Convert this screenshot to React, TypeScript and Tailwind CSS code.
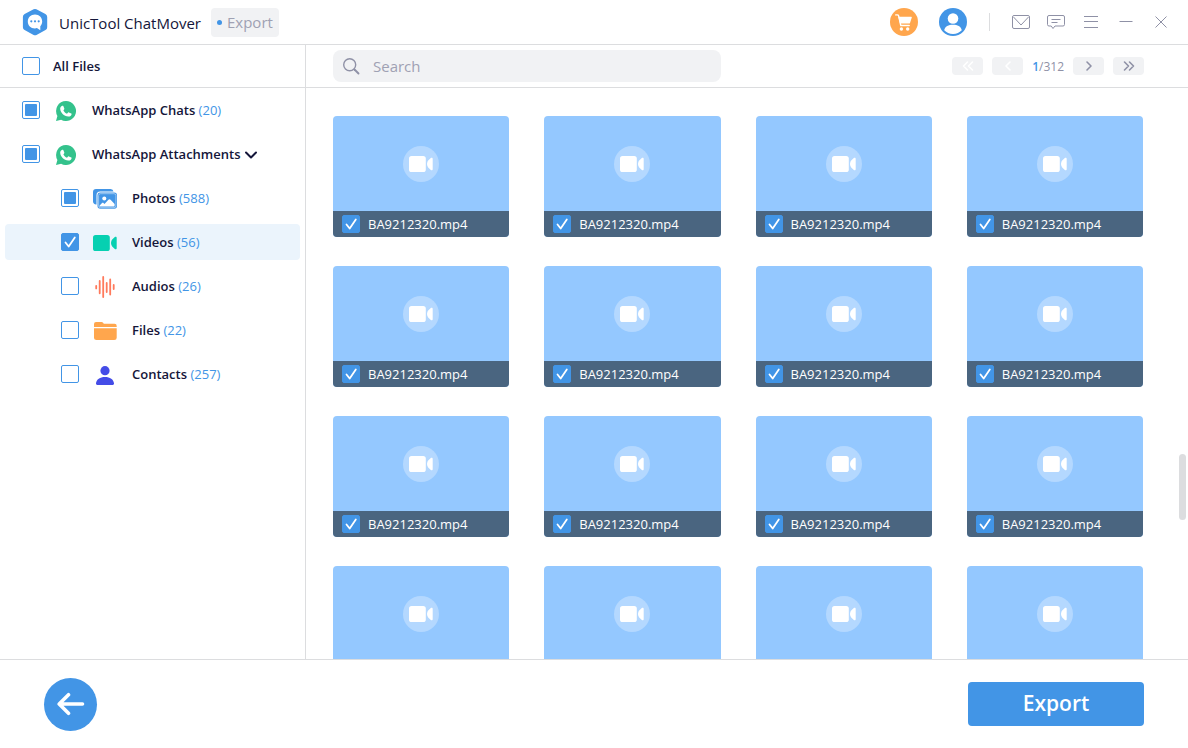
import { useEffect, useRef, useState, type ReactNode } from 'react'

type CheckState = 'on' | 'off' | 'partial'

interface CheckboxProps {
  id: string
  state: CheckState
  onToggle: () => void
}

function Checkbox({ id, state, onToggle }: CheckboxProps) {
  const ref = useRef<HTMLInputElement>(null)

  useEffect(() => {
    if (ref.current) ref.current.indeterminate = state === 'partial'
  }, [state])

  return (
    <span className="grid h-[18px] w-[18px] shrink-0 place-items-center">
      <input
        ref={ref}
        id={id}
        type="checkbox"
        checked={state === 'on'}
        onChange={onToggle}
        className={`col-start-1 row-start-1 h-[18px] w-[18px] appearance-none rounded-[2px] border border-[#4295e6] ${
          state === 'on' ? 'bg-[#4295e6]' : 'bg-white'
        }`}
      />
      {state === 'partial' && (
        <span className="pointer-events-none z-10 col-start-1 row-start-1 h-3 w-3 rounded-[1px] bg-[#4295e6]" />
      )}
      {state === 'on' && (
        <svg className="pointer-events-none z-10 col-start-1 row-start-1 h-[18px] w-[18px]" viewBox="0 0 18 18" fill="none">
          <path d="M4.5 9.500 7.700 13.500 13.800 4.500" stroke="white" strokeWidth="1.800" strokeLinecap="round" strokeLinejoin="round" />
        </svg>
      )}
    </span>
  )
}

function LogoIcon() {
  return (
    <svg className="h-7 w-7" viewBox="0 0 28 28" fill="none">
      <path
        d="M12.600 1.300a3 3 0 0 1 2.800 0l9 4.800A3.200 3.200 0 0 1 26.200 9v10.200a3.200 3.200 0 0 1-1.700 2.800l-9 4.900a3 3 0 0 1-2.900 0l-9-4.900a3.200 3.200 0 0 1-1.700-2.800V9a3.200 3.200 0 0 1 1.700-2.900z"
        fill="#4295e6"
      />
      <path
        d="M14 6.600c4.300 0 7.200 2.900 7.200 6.900 0 1.900-.7 3.500-1.900 4.700v4l-3.400-2.100c-.6.200-1.300.3-1.900.3-4.300 0-7.200-2.900-7.200-6.900S9.700 6.600 14 6.600Z"
        fill="white"
      />
      <g fill="#4295e6">
        <circle cx="10.300" cy="13.300" r="1.100" />
        <circle cx="14" cy="13.300" r="1.100" />
        <circle cx="17.700" cy="13.300" r="1.100" />
      </g>
    </svg>
  )
}

function CartIcon() {
  return (
    <svg className="h-7 w-7" viewBox="0 0 28 28" fill="none">
      <circle cx="14" cy="14" r="14" fill="#ffa64d" />
      <path d="M5.700 6.900h1.700c.6 0 1 .3 1.200.9l2.200 9.700h8.400" stroke="white" strokeWidth="1.400" strokeLinecap="round" strokeLinejoin="round" />
      <path d="M8.300 8.700h12.900c.5 0 .7.3.6.8l-1.800 5.500c-.1.400-.4.6-.8.6h-9.200z" fill="white" />
      <circle cx="11.400" cy="21" r="1.700" fill="white" />
      <circle cx="17.700" cy="21" r="1.700" fill="white" />
    </svg>
  )
}

function UserIcon() {
  return (
    <svg className="h-7 w-7" viewBox="0 0 28 28">
      <circle cx="14" cy="14" r="14" fill="#4295e6" />
      <circle cx="14" cy="10.500" r="5.300" fill="white" />
      <path d="M5.200 22.300c.7-3.900 4.400-5.600 8.800-5.600s8.100 1.700 8.800 5.600A12.200 12.200 0 0 1 14 25.900a12.200 12.200 0 0 1-8.800-3.600Z" fill="white" />
    </svg>
  )
}

function WhatsAppIcon() {
  return (
    <svg className="h-5 w-5" viewBox="0 0 20 20">
      <path d="M10 0a10 10 0 1 1-4.900 18.700L0 20l1.400-5A10 10 0 0 1 10 0Z" fill="#34c28c" />
      <path
        d="M6.300 4.700c.4-.1.800 0 1 .4l1 2.400c.1.300.1.500-.1.800l-.8 1.100c.9 1.600 2 2.700 3.600 3.400l1.100-1.200c.2-.3.500-.3.800-.2l2.400 1.200c.3.200.4.400.3.700-.3 1.600-1.700 2.400-3.200 2.300-4.600-.4-8-3.900-8.200-7.800 0-1.400.7-2.800 2.100-3.100Z"
        fill="white"
      />
    </svg>
  )
}

function PhotosIcon() {
  return (
    <svg className="h-5 w-6" viewBox="0 0 24 20" fill="none">
      <path d="M3 0h14.500a3 3 0 0 1 3 2.600H7.200A3.700 3.700 0 0 0 3.500 6.300v9.200A3 3 0 0 1 0 12.500V3a3 3 0 0 1 3-3Z" fill="#4295e6" />
      <rect x="4.500" y="3.600" width="19.500" height="16.200" rx="2.800" fill="#4295e6" />
      <rect x="5.600" y="4.700" width="17.300" height="14" rx="1.900" stroke="#cfe4f9" strokeWidth=".6" />
      <circle cx="11.300" cy="9.500" r="2" fill="white" />
      <path d="M7.200 17.600c-.8 0-1-.6-.5-1.200l2.100-2.100c.6-.6 1.300-.6 1.900 0l.8.7 3.900-4.200c.7-.7 1.500-.7 2.200 0l4 4.200v1.400c0 .8-.5 1.200-1.200 1.200z" fill="white" />
    </svg>
  )
}

function CameraIcon({ className }: { className: string }) {
  return (
    <svg className={className} viewBox="0 0 24 16" fill="currentColor">
      <rect width="16.800" height="16" rx="2.600" />
      <path d="M18.300 6.200c.2-.6.500-1.100.9-1.600l2.600-2.500c.8-.8 1.900-.4 1.900.7v10.400c0 1.100-1.100 1.500-1.900.7l-2.600-2.500c-.4-.5-.7-1-.9-1.600a6 6 0 0 1 0-3.600Z" />
    </svg>
  )
}

function AudioIcon() {
  return (
    <svg className="h-[22px] w-5" viewBox="0 0 20 22" fill="none" stroke="#ff7a5c" strokeWidth="1.800" strokeLinecap="round">
      <path d="M1.200 9.800v2.600M4.700 5v12.300M8.200 1v20M11.700 7v9M15.200 3.400v15.200M18.700 9v4" />
    </svg>
  )
}

function FolderIcon() {
  return (
    <svg className="h-[18px] w-[23px]" viewBox="0 0 23 18" fill="#ffa64d">
      <path d="M0 5V2a2 2 0 0 1 2-2h5.500c.7 0 1.200.3 1.600.8l.7.9H20.500A2.200 2.200 0 0 1 22.700 4v1z" />
      <path d="M0 6.200h22.700v9.300A2.400 2.400 0 0 1 20.300 18H2.400A2.400 2.400 0 0 1 0 15.500z" />
    </svg>
  )
}

function ContactIcon() {
  return (
    <svg className="h-[19px] w-[18px]" viewBox="0 0 18 19" fill="#444ce7">
      <circle cx="9" cy="4.700" r="4.600" />
      <path d="M9 11c5 0 8.600 2.300 9 6.300.1.900-.4 1.600-1.200 1.600H1.200c-.8 0-1.300-.7-1.200-1.600.4-4 4-6.300 9-6.300Z" />
    </svg>
  )
}

interface FileGroup {
  id: string
  name: string
  count?: number
  icon: ReactNode
  child?: boolean
}

const groups: FileGroup[] = [
  { id: 'chats', name: 'WhatsApp Chats', count: 20, icon: <WhatsAppIcon /> },
  { id: 'attachments', name: 'WhatsApp Attachments', icon: <WhatsAppIcon /> },
  { id: 'photos', name: 'Photos', count: 588, icon: <PhotosIcon />, child: true },
  { id: 'videos', name: 'Videos', count: 56, icon: <CameraIcon className="h-4 w-6 text-[#06d0b1]" />, child: true },
  { id: 'audios', name: 'Audios', count: 26, icon: <AudioIcon />, child: true },
  { id: 'files', name: 'Files', count: 22, icon: <FolderIcon />, child: true },
  { id: 'contacts', name: 'Contacts', count: 257, icon: <ContactIcon />, child: true },
]

const initialChecks: Record<string, CheckState> = {
  all: 'off',
  chats: 'partial',
  attachments: 'partial',
  photos: 'partial',
  videos: 'on',
  audios: 'off',
  files: 'off',
  contacts: 'off',
}

const videos = Array.from({ length: 16 }, (_, i) => ({ id: `video-${i}`, name: 'BA9212320.mp4' }))

function TitleBar() {
  return (
    <header className="flex h-[45px] shrink-0 items-center border-b border-[#dcdddf] pr-[18px] pl-[21px]">
      <LogoIcon />
      <h1 className="ml-[10px] pt-0.5 text-[15px]">UnicTool ChatMover</h1>
      <nav className="ml-[10px] flex h-[29px] items-center gap-[5px] rounded-[4px] bg-[#f1f2f4] px-[6px] text-[15px] text-[#9fa1b3]">
        <span className="h-[5px] w-[5px] rounded-full bg-[#4295e6]" />
        Export
      </nav>
      <div className="ml-auto flex items-center">
        <button aria-label="Store">
          <CartIcon />
        </button>
        <button aria-label="Account" className="ml-[21px]">
          <UserIcon />
        </button>
        <span className="ml-[22px] h-[18px] w-px bg-[#dcdddf]" />
        <div className="ml-[22px] flex items-center gap-[17px] text-[#8f91a6]">
          <button aria-label="Mail">
            <svg className="h-[18px] w-[18px]" viewBox="0 0 18 18" fill="none" stroke="currentColor">
              <rect x=".5" y="2.500" width="17" height="13" rx="1.500" />
              <path d="m1.500 4 7.500 8 7.500-8" />
            </svg>
          </button>
          <button aria-label="Feedback">
            <svg className="h-[18px] w-[18px]" viewBox="0 0 18 18" fill="none" stroke="currentColor">
              <path d="M2 2.500h14a1.500 1.500 0 0 1 1.500 1.500v7.500A1.500 1.500 0 0 1 16 13H8l-2 2.500L4.200 13H2A1.500 1.500 0 0 1 .5 11.500V4A1.500 1.500 0 0 1 2 2.500ZM4.500 6.500h9M4.500 9.500h6" />
            </svg>
          </button>
          <button aria-label="Menu">
            <svg className="h-[18px] w-[18px]" viewBox="0 0 18 18" fill="none" stroke="currentColor">
              <path d="M2 3.500h14M2 8.500h14M2 14.500h14" />
            </svg>
          </button>
          <button aria-label="Minimize">
            <svg className="h-[18px] w-[18px]" viewBox="0 0 18 18" fill="none" stroke="currentColor">
              <path d="M2.500 8.500h13" />
            </svg>
          </button>
          <button aria-label="Close">
            <svg className="h-[18px] w-[18px]" viewBox="0 0 18 18" fill="none" stroke="currentColor">
              <path d="m3.500 3.500 11 11M14.500 3.500l-11 11" />
            </svg>
          </button>
        </div>
      </div>
    </header>
  )
}

interface SidebarProps {
  checks: Record<string, CheckState>
  onToggle: (id: string) => void
}

function Sidebar({ checks, onToggle }: SidebarProps) {
  return (
    <aside className="w-[306px] shrink-0 border-r border-[#dcdddf] text-[13px] font-semibold">
      <div className="flex h-[43px] items-center gap-[13px] border-b border-[#dcdddf] pl-[22px]">
        <Checkbox id="all" state={checks.all} onToggle={() => onToggle('all')} />
        <label htmlFor="all" className="pt-0.5">
          All Files
        </label>
      </div>
      <ul className="flex flex-col gap-2 px-[5px] py-1">
        {groups.map((group) => (
          <li
            key={group.id}
            className={`flex h-9 items-center rounded-[4px] ${group.child ? 'pl-14' : 'pl-[17px]'} ${
              group.id === 'videos' ? 'bg-[#ebf4fc]' : ''
            }`}
          >
            <Checkbox id={group.id} state={checks[group.id]} onToggle={() => onToggle(group.id)} />
            <span className={`flex shrink-0 justify-center pt-0.5 ${group.child ? 'mr-[13px] ml-3 w-7' : 'mx-4 w-5'}`}>
              {group.icon}
            </span>
            <label htmlFor={group.id} className="pt-0.5">
              {group.name}
              {group.count !== undefined && <span className="font-medium text-[#4295e6]"> ({group.count})</span>}
            </label>
            {group.id === 'attachments' && (
              <button aria-label="Collapse attachments" className="ml-[5px] pt-0.5">
                <svg className="h-3 w-3" viewBox="0 0 12 12" fill="none" stroke="currentColor" strokeWidth="2">
                  <path d="m1 3.500 5 5 5-5" strokeLinecap="round" strokeLinejoin="round" />
                </svg>
              </button>
            )}
          </li>
        ))}
      </ul>
    </aside>
  )
}

interface PageButtonProps {
  label: string
  path: string
  disabled?: boolean
}

function PageButton({ label, path, disabled }: PageButtonProps) {
  return (
    <button
      aria-label={label}
      disabled={disabled}
      className={`flex h-[18px] w-[31px] items-center justify-center rounded-[4px] bg-[#f1f2f4] ${
        disabled ? 'text-white' : 'text-[#8f91a6]'
      }`}
    >
      <svg className="h-3 w-3" viewBox="0 0 12 12" fill="none" stroke="currentColor" strokeWidth="1.600">
        <path d={path} strokeLinecap="round" strokeLinejoin="round" />
      </svg>
    </button>
  )
}

function Toolbar() {
  return (
    <div className="flex h-[43px] shrink-0 items-center justify-between gap-6 border-b border-[#dcdddf] pr-11 pl-[27px]">
      <div className="flex h-8 w-full max-w-[388px] items-center gap-3 rounded-lg bg-[#f1f2f4] px-[10px]">
        <svg className="h-[18px] w-[18px] shrink-0" viewBox="0 0 18 18" fill="none" stroke="#8f91a6" strokeWidth="1.400">
          <circle cx="6.700" cy="7.700" r="6" />
          <path d="m11.500 12.500 4 4" strokeWidth="1.900" strokeLinecap="round" />
        </svg>
        <input
          type="search"
          aria-label="Search"
          placeholder="Search"
          className="w-full bg-transparent text-[15px] outline-none placeholder:text-[#9fa1b3]"
        />
      </div>
      <div className="flex shrink-0 items-center gap-[9px]">
        <PageButton label="First page" path="M5.500 2 1.500 6l4 4M10.500 2l-4 4 4 4" disabled />
        <PageButton label="Previous page" path="M8 2 4 6l4 4" disabled />
        <span className="pt-0.5 text-[12px] text-[#8f91a6]">
          <span className="font-semibold text-[#4295e6]">1</span>/312
        </span>
        <PageButton label="Next page" path="m4 2 4 4-4 4" />
        <PageButton label="Last page" path="m1.500 2 4 4-4 4M6.500 2l4 4-4 4" />
      </div>
    </div>
  )
}

interface VideoCardProps {
  id: string
  name: string
}

function VideoCard({ id, name }: VideoCardProps) {
  const [checked, setChecked] = useState(true)

  return (
    <li className="flex flex-col overflow-hidden rounded-[4px] bg-[#94c8ff]">
      <div className="flex h-[95px] items-center justify-center">
        <span className="flex h-9 w-9 items-center justify-center rounded-full bg-[#b4d8ff]">
          <CameraIcon className="h-4 w-6 text-white" />
        </span>
      </div>
      <div className="flex h-[26px] items-center gap-2 bg-[#4a6580] px-[9px] text-[13px] font-medium text-white">
        <Checkbox id={id} state={checked ? 'on' : 'off'} onToggle={() => setChecked(!checked)} />
        <label htmlFor={id} className="pt-0.5">
          {name}
        </label>
      </div>
    </li>
  )
}

export default function App() {
  const [checks, setChecks] = useState(initialChecks)

  const handleToggle = (id: string) => {
    setChecks((prev) => ({ ...prev, [id]: prev[id] === 'on' ? 'off' : 'on' }))
  }

  return (
    <div className="flex h-screen flex-col bg-white font-['Open_Sans','Noto_Sans',sans-serif] text-[#14163a]">
      <TitleBar />
      <div className="flex min-h-0 flex-1">
        <Sidebar checks={checks} onToggle={handleToggle} />
        <main className="relative flex min-w-0 flex-1 flex-col">
          <Toolbar />
          <div className="min-h-0 flex-1 overflow-y-auto pt-7 pr-[45px] pl-[27px] [scrollbar-width:none]">
            <ul className="grid grid-cols-4 gap-x-[35px] gap-y-[29px]">
              {videos.map((video) => (
                <VideoCard key={video.id} id={video.id} name={video.name} />
              ))}
            </ul>
          </div>
          {/* scroll thumb */}
          <span className="absolute right-[2px] bottom-[139px] h-[66px] w-[7px] rounded-full bg-[#dcdddf]" />
        </main>
      </div>
      <footer className="flex h-[89px] shrink-0 items-center justify-between border-t border-[#dcdddf] px-11">
        <button
          aria-label="Back"
          className="flex h-[53px] w-[53px] items-center justify-center rounded-full bg-[#4295e6] text-white"
        >
          <svg className="h-7 w-7" viewBox="0 0 28 28" fill="none" stroke="currentColor" strokeWidth="3.600">
            <path d="M25.500 14H3M11.500 4.700 2.200 14l9.300 9.300" strokeLinecap="round" strokeLinejoin="round" />
          </svg>
        </button>
        <button className="h-11 w-44 rounded-[4px] bg-[#4295e6] text-[21px] font-semibold text-white">Export</button>
      </footer>
    </div>
  )
}
